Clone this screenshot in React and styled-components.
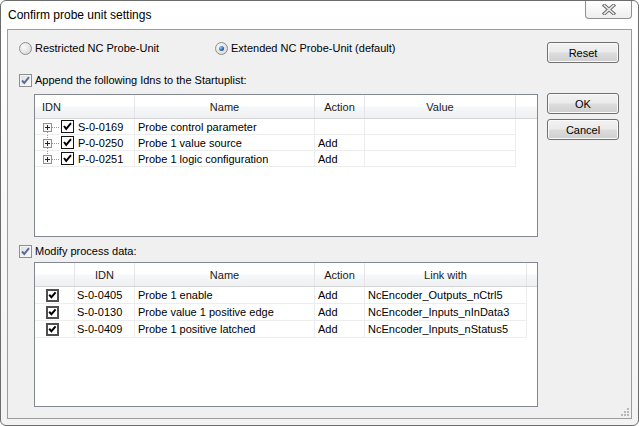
import React from "react";
import styled, { createGlobalStyle } from "styled-components";

const GlobalStyle = createGlobalStyle`
  html, body { margin: 0; padding: 0; background: #ffffff; }
  body { font-family: "Liberation Sans", Arial, sans-serif; font-size: 11px; color: #000; }
  * { box-sizing: border-box; }
`;

const Window = styled.div`
  width: 639px;
  height: 426px;
  border: 1px solid #6c6c6c;
  border-radius: 6px;
  background: linear-gradient(#ffffff, #f3f3f3);
  padding: 0 6px 6px;
  display: flex;
  flex-direction: column;
  overflow: hidden;
`;

const TitleBar = styled.div`
  height: 28px;
  display: flex;
  align-items: center;
  flex: none;
`;

const Title = styled.div`
  font-size: 12px;
  padding-left: 1px;
  color: #000;
`;

const CloseButton = styled.div`
  margin-left: auto;
  align-self: flex-start;
  width: 47px;
  height: 18px;
  border: 1px solid #8f8f8f;
  border-top: none;
  border-radius: 0 0 4px 4px;
  background: linear-gradient(#ffffff, #eeeeee);
  display: flex;
  align-items: center;
  justify-content: center;
`;

const Client = styled.div`
  flex: 1;
  position: relative;
  border: 1px solid #9c9c9c;
  background: #f0f0f0;
  display: flex;
`;

const Main = styled.div`
  padding: 10px 0 0 11px;
  display: flex;
  flex-direction: column;
`;

const Side = styled.div`
  margin-left: auto;
  margin-right: 12px;
  padding-top: 12px;
  width: 72px;
  display: flex;
  flex-direction: column;
`;

const ButtonStack = styled.div`
  margin-top: 30px;
  display: flex;
  flex-direction: column;
  gap: 5px;
`;

const Button = styled.div`
  width: 72px;
  height: 21px;
  border: 1px solid #707070;
  border-radius: 3px;
  background: linear-gradient(#f2f2f2 0%, #ebebeb 48%, #dddddd 52%, #cfcfcf 100%);
  box-shadow: inset 0 0 0 1px #fbfbfb;
  display: flex;
  align-items: center;
  justify-content: center;
  font-size: 11px;
`;

const RadioRow = styled.div`
  display: grid;
  grid-template-columns: 196px auto;
  height: 16px;
  align-items: center;
`;

const Option = styled.label`
  display: flex;
  align-items: center;
  gap: 3px;
  white-space: nowrap;
`;

const Radio = styled.span`
  position: relative;
  width: 13px;
  height: 13px;
  border-radius: 50%;
  border: 1px solid #8e8f8f;
  background: radial-gradient(circle at 35% 35%, #fbfbfb 0%, #e4e4e4 55%, #cfcfcf 100%);
  flex: none;
  &::after {
    content: "";
    display: ${(p) => (p.$checked ? "block" : "none")};
    position: absolute;
    left: 3px;
    top: 3px;
    width: 5px;
    height: 5px;
    border-radius: 50%;
    background: radial-gradient(circle at 35% 35%, #9ad0f5 0%, #2a6cae 55%, #0d3d70 100%);
  }
`;

const CheckRow = styled.label`
  display: flex;
  align-items: center;
  gap: 3px;
  height: 16px;
  margin-top: ${(p) => p.$top}px;
  white-space: nowrap;
`;

const DialogCheck = styled.span`
  width: 13px;
  height: 13px;
  border: 1px solid #8f8f8f;
  background: linear-gradient(135deg, #dedede, #fbfbfb);
  box-shadow: inset 0 0 0 1px #f4f4f4;
  display: flex;
  align-items: center;
  justify-content: center;
  flex: none;
`;

const ListView = styled.div`
  margin-left: 15px;
  margin-top: ${(p) => p.$top}px;
  width: 504px;
  height: ${(p) => p.$height}px;
  border: 1px solid #828790;
  background: #ffffff;
  overflow: hidden;
`;

const Header = styled.div`
  display: grid;
  grid-template-columns: ${(p) => p.$cols};
  height: 24px;
  border-bottom: 1px solid #d5d5d5;
  background: linear-gradient(#ffffff 0%, #ffffff 45%, #f6f7f8 55%, #eff0f2 100%);
`;

const HeaderCell = styled.div`
  display: flex;
  align-items: center;
  justify-content: ${(p) => (p.$left ? "flex-start" : "center")};
  padding: ${(p) => (p.$left ? "0 0 0 7px" : "0")};
  border-right: ${(p) => (p.$filler ? "none" : "1px solid #e3e5e8")};
  color: #1b1b1b;
  white-space: nowrap;
`;

const Row = styled.div`
  display: grid;
  grid-template-columns: ${(p) => p.$cols};
  height: ${(p) => p.$h}px;
`;

const Cell = styled.div`
  display: flex;
  align-items: center;
  padding-left: ${(p) => (p.$pad != null ? p.$pad : 3)}px;
  border-right: 1px solid #ededed;
  border-bottom: 1px solid #ededed;
  white-space: nowrap;
  overflow: hidden;
`;

const Filler = styled.div``;

const TreeCheck = styled.span`
  width: 13px;
  height: 13px;
  margin-left: 2px;
  margin-right: 4px;
  border: 1px solid #151515;
  background: #ffffff;
  display: flex;
  align-items: center;
  justify-content: center;
  flex: none;
`;

const GridCheck = styled.span`
  width: 13px;
  height: 13px;
  border: 2px solid #4f4f4f;
  background: #ffffff;
  display: flex;
  align-items: center;
  justify-content: center;
  flex: none;
`;

const Grip = styled.svg`
  position: absolute;
  right: 1px;
  bottom: 1px;
`;

function CloseIcon() {
  return (
    <svg width="14" height="11" viewBox="0 0 14 11">
      <path d="M2.5 1.5 L11.5 9.5 M11.5 1.5 L2.5 9.5" stroke="#6f6f6f" strokeWidth="3.6" strokeLinecap="square" fill="none" />
      <path d="M2.5 1.5 L11.5 9.5 M11.5 1.5 L2.5 9.5" stroke="#e9e9e9" strokeWidth="1.6" strokeLinecap="square" fill="none" />
    </svg>
  );
}

function TreeGlyph({ pos }) {
  return (
    <svg width="18" height="15" viewBox="0 0 18 15">
      {pos !== "first" && (
        <line x1="6.5" y1="0" x2="6.5" y2="4" stroke="#9a9a9a" strokeDasharray="1 1" />
      )}
      {pos !== "last" && (
        <line x1="6.5" y1="13" x2="6.5" y2="15" stroke="#9a9a9a" strokeDasharray="1 1" />
      )}
      <line x1="11" y1="8.5" x2="18" y2="8.5" stroke="#9a9a9a" strokeDasharray="1 1" />
      <rect x="2.5" y="4.5" width="8" height="8" fill="#f7f7f7" stroke="#919191" />
      <path d="M4 8.5h5M6.5 6v5" stroke="#222" />
    </svg>
  );
}

function BlackCheck() {
  return (
    <svg width="11" height="11" viewBox="0 0 11 11">
      <polyline points="2,5 4.2,7.8 9,2.2" fill="none" stroke="#000" strokeWidth="2" />
    </svg>
  );
}

function SmallCheck() {
  return (
    <svg width="9" height="9" viewBox="0 0 9 9">
      <polyline points="1.2,3.8 3.4,6.2 7.6,1.4" fill="none" stroke="#000" strokeWidth="2" />
    </svg>
  );
}

function BlueCheck() {
  return (
    <svg width="11" height="11" viewBox="0 0 11 11">
      <polyline points="2,5.5 4.3,8 9,2.2" fill="none" stroke="#5b6e98" strokeWidth="2" />
    </svg>
  );
}

const startupCols = "100px 180px 50px 151px 1fr";
const processCols = "40px 60px 180px 50px 162px 1fr";

const startupRows = [
  { idn: "S-0-0169", name: "Probe control parameter", action: "", value: "" },
  { idn: "P-0-0250", name: "Probe 1 value source", action: "Add", value: "" },
  { idn: "P-0-0251", name: "Probe 1 logic configuration", action: "Add", value: "" },
];

const processRows = [
  { idn: "S-0-0405", name: "Probe 1 enable", action: "Add", link: "NcEncoder_Outputs_nCtrl5" },
  { idn: "S-0-0130", name: "Probe value 1 positive edge", action: "Add", link: "NcEncoder_Inputs_nInData3" },
  { idn: "S-0-0409", name: "Probe 1 positive latched", action: "Add", link: "NcEncoder_Inputs_nStatus5" },
];

export default function App() {
  return (
    <>
      <GlobalStyle />
      <Window>
        <TitleBar>
          <Title>Confirm probe unit settings</Title>
          <CloseButton>
            <CloseIcon />
          </CloseButton>
        </TitleBar>
        <Client>
          <Main>
            <RadioRow>
              <Option>
                <Radio />
                Restricted NC Probe-Unit
              </Option>
              <Option>
                <Radio $checked />
                Extended NC Probe-Unit (default)
              </Option>
            </RadioRow>
            <CheckRow $top={16}>
              <DialogCheck>
                <BlueCheck />
              </DialogCheck>
              Append the following Idns to the Startuplist:
            </CheckRow>
            <ListView $top={6} $height={143}>
              <Header $cols={startupCols}>
                <HeaderCell $left>IDN</HeaderCell>
                <HeaderCell>Name</HeaderCell>
                <HeaderCell>Action</HeaderCell>
                <HeaderCell>Value</HeaderCell>
                <HeaderCell $filler />
              </Header>
              {startupRows.map((r, i) => (
                <Row key={r.idn} $cols={startupCols} $h={16}>
                  <Cell $pad={6}>
                    <TreeGlyph pos={i === 0 ? "first" : i === startupRows.length - 1 ? "last" : "mid"} />
                    <TreeCheck>
                      <BlackCheck />
                    </TreeCheck>
                    {r.idn}
                  </Cell>
                  <Cell>{r.name}</Cell>
                  <Cell>{r.action}</Cell>
                  <Cell>{r.value}</Cell>
                  <Filler />
                </Row>
              ))}
            </ListView>
            <CheckRow $top={6}>
              <DialogCheck>
                <BlueCheck />
              </DialogCheck>
              Modify process data:
            </CheckRow>
            <ListView $top={3} $height={145}>
              <Header $cols={processCols}>
                <HeaderCell />
                <HeaderCell>IDN</HeaderCell>
                <HeaderCell>Name</HeaderCell>
                <HeaderCell>Action</HeaderCell>
                <HeaderCell>Link with</HeaderCell>
                <HeaderCell $filler />
              </Header>
              {processRows.map((r) => (
                <Row key={r.idn} $cols={processCols} $h={17}>
                  <Cell $pad={11}>
                    <GridCheck>
                      <SmallCheck />
                    </GridCheck>
                  </Cell>
                  <Cell $pad={2}>{r.idn}</Cell>
                  <Cell>{r.name}</Cell>
                  <Cell>{r.action}</Cell>
                  <Cell>{r.link}</Cell>
                  <Filler />
                </Row>
              ))}
            </ListView>
          </Main>
          <Side>
            <Button>Reset</Button>
            <ButtonStack>
              <Button>OK</Button>
              <Button>Cancel</Button>
            </ButtonStack>
          </Side>
          <Grip width="11" height="11" viewBox="0 0 11 11">
            {[
              [8, 2],
              [8, 5],
              [5, 5],
              [8, 8],
              [5, 8],
              [2, 8],
            ].map(([x, y]) => (
              <rect key={`${x}-${y}`} x={x} y={y} width="2" height="2" fill="#b8b8b8" />
            ))}
          </Grip>
        </Client>
      </Window>
    </>
  );
}
